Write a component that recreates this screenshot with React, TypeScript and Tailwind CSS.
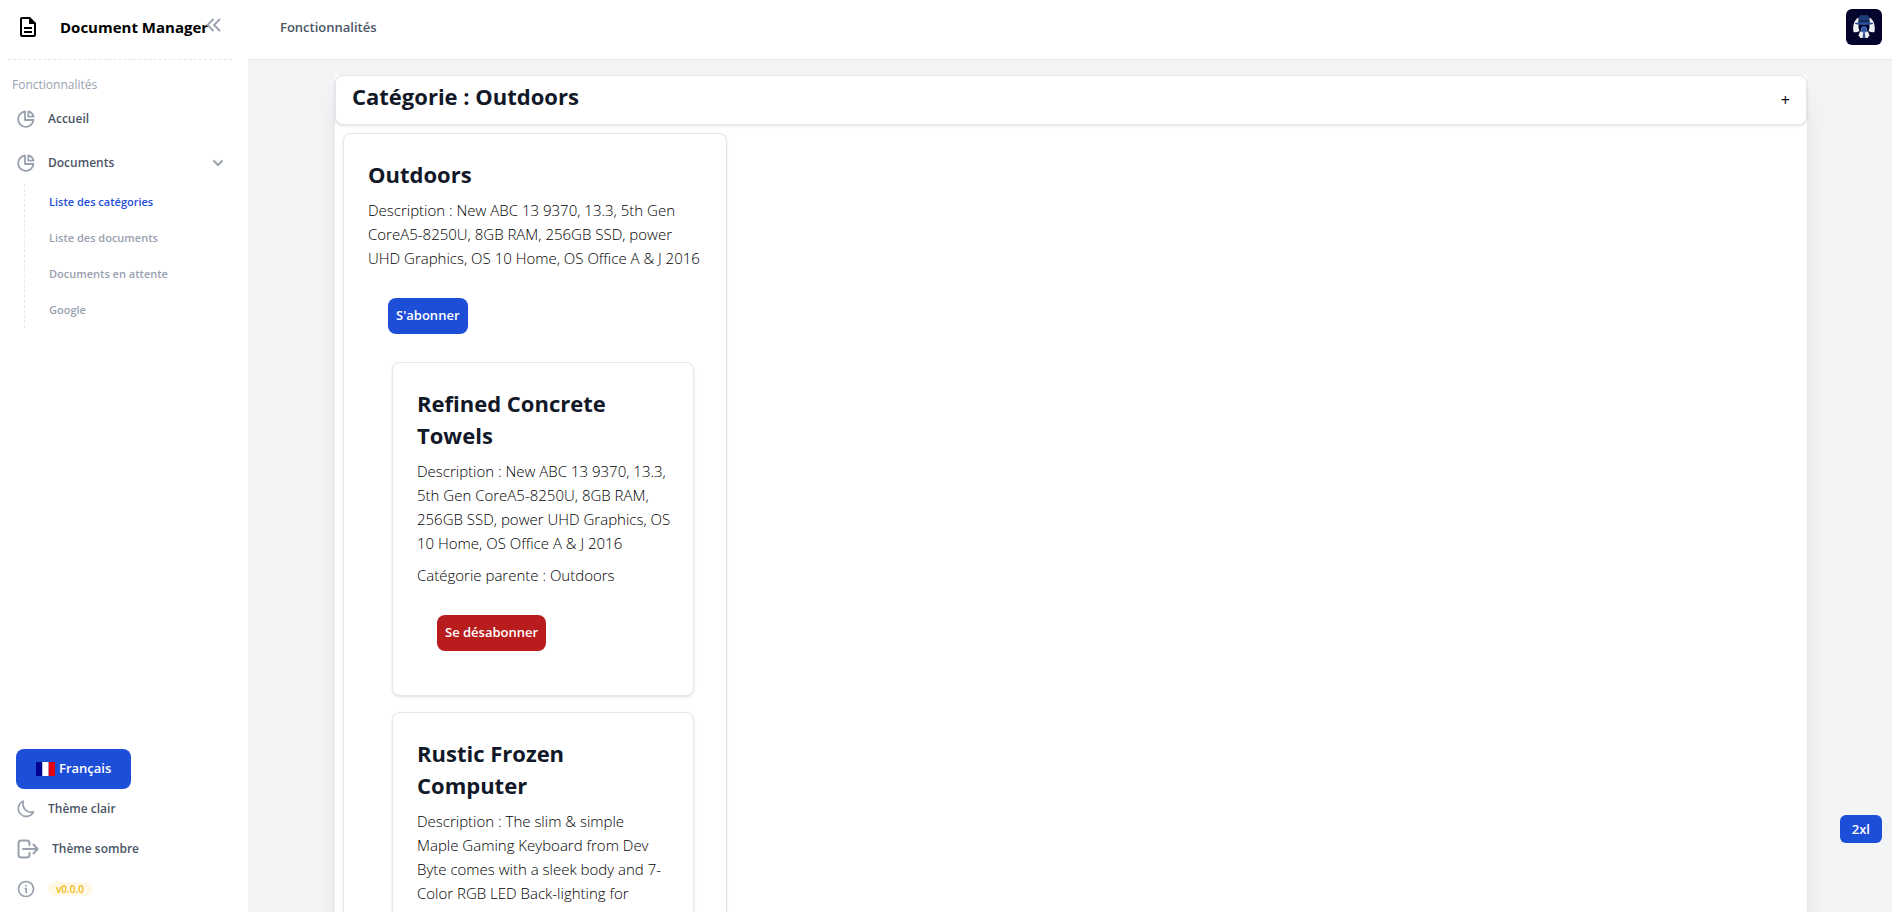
import React from "react";

const PieIcon = () => (
  <svg viewBox="0 0 20 20" className="size-5 shrink-0 text-gray-400" fill="none" stroke="currentColor" strokeWidth="1.8" strokeLinejoin="round" strokeLinecap="round">
    <path d="M9 2.500a7.700 7.700 0 1 0 8.500 8.500H9z" />
    <path d="M12.300 2.500v5.200h5.200A6.500 6.500 0 0 0 12.300 2.500z" />
  </svg>
);

const MoonIcon = () => (
  <svg viewBox="0 0 20 20" className="size-5 shrink-0 text-gray-400" fill="none" stroke="currentColor" strokeWidth="1.7" strokeLinejoin="round">
    <path d="M7.200 2.200a7.900 7.900 0 1 0 10.200 10.600C13 14.500 5.500 11 7.200 2.200z" />
  </svg>
);

const LogoutIcon = () => (
  <svg viewBox="0 0 24 24" className="size-6 shrink-0 text-gray-400" fill="none" stroke="currentColor" strokeWidth="2" strokeLinejoin="round" strokeLinecap="round">
    <path d="M13.500 8V6.500a3 3 0 0 0-3-3h-5a3 3 0 0 0-3 3v11a3 3 0 0 0 3 3h5a3 3 0 0 0 3-3V16" />
    <path d="M7 12h14M17.500 7.500 21.500 12l-4 4.500" />
  </svg>
);

const InfoIcon = () => (
  <svg viewBox="0 0 20 20" className="size-5 shrink-0 text-gray-400" fill="none" stroke="currentColor" strokeWidth="1.700" strokeLinecap="round">
    <circle cx="10" cy="10" r="7.500" />
    <path d="M9.300 9.500h.9v4M9.900 6.600v.2" />
  </svg>
);

const FileIcon = () => (
  <svg viewBox="0 0 24 24" className="size-6 shrink-0" fill="currentColor">
    <path d="M8 16h8v2H8zm0-4h8v2H8zm6-10H6c-1.100 0-2 .9-2 2v16c0 1.100.89 2 1.990 2H18c1.100 0 2-.9 2-2V8l-6-6zm4 18H6V4h7v5h5v11z" />
  </svg>
);

const Avatar = () => (
  <svg viewBox="0 0 36 36" className="size-9 rounded-md">
    <rect width="36" height="36" fill="#03032b" />
    <path d="M12.500 8.500C8 11 6.500 17 7.500 23q3 1 6-1l-1-3zM23.500 8.500C28 11 29.500 17 28.500 23q-3 1-6-1l1-3z" fill="#eef0f2" />
    <path d="M14 22.500h8l1.500 4-2 2.500h-7l-2-2.500z" fill="#eef0f2" />
    <path d="M12.800 13.500 13.200 7q1-1.200 3-1l1.800.6 1.800-.6q2-.2 3 1l.4 6.500z" fill="#1c3c78" />
    <path d="M12.800 11.500h10.400v1.500H12.800z" fill="#0d2250" />
    <path d="M9 14q9-1.800 18 0 .5 1-1 1.300-8 1.400-16 0-1.500-.3-1-1.300z" fill="#2a4f92" />
    <circle cx="18" cy="20.500" r="3.200" fill="#3c66b5" />
    <circle cx="18" cy="20.500" r="1.300" fill="#28498a" />
    <path d="M17.200 23.700h1.600l.6 5.300h-2.800z" fill="#2a4f92" />
  </svg>
);

const subItems = ["Liste des catégories", "Liste des documents", "Documents en attente", "Google"];

function Sidebar() {
  return (
    <aside className="flex w-[248px] shrink-0 flex-col bg-white">
      <div className="mr-4 ml-2 flex h-[60px] shrink-0 items-start border-b border-dashed border-gray-200 pt-[15px]">
        <a href="#" className="flex grow items-center pl-2 text-black">
          <FileIcon />
          <span className="ml-5 text-[15px] leading-6 font-bold whitespace-nowrap">Document Manager</span>
        </a>
        <button aria-label="Réduire le menu" className="mr-2 -ml-2 flex size-5 shrink-0 items-center justify-center text-gray-400">
          <svg viewBox="0 0 20 20" className="size-5" fill="none" stroke="currentColor" strokeWidth="1.8">
            <path d="m9.500 4-6 6 6 6M16 4l-6 6 6 6" />
          </svg>
        </button>
      </div>
      <nav className="flex flex-col pt-4 text-[12px] font-semibold text-gray-600">
        <h2 className="mb-[3px] px-3 leading-[18px] font-medium text-gray-400">Fonctionnalités</h2>
        <a href="#" className="flex h-11 items-center gap-3 px-4 leading-5">
          <PieIcon />
          Accueil
        </a>
        <button className="flex h-[43px] items-center gap-3 px-4 leading-5">
          <PieIcon />
          Documents
          <svg viewBox="0 0 12 12" className="mr-2 ml-auto size-3 text-gray-400" fill="none" stroke="currentColor" strokeWidth="2">
            <path d="m1.500 3.500 4.500 4.500 4.500-4.500" />
          </svg>
        </button>
        <ul className="ml-6 border-l border-dashed border-gray-200 pl-6 text-[11px] text-gray-400">
          {subItems.map((label, i) => (
            <li key={label}>
              <a href="#" className={i === 0 ? "flex h-9 items-center text-[#1d4ed8]" : "flex h-9 items-center"}>{label}</a>
            </li>
          ))}
        </ul>
      </nav>
      <div className="mt-auto flex flex-col items-start pb-[3px] text-[12px] font-semibold text-gray-600">
        <button className="ml-4 flex h-10 items-center gap-1 rounded-lg bg-[#1d4ed8] px-5 text-[13px] text-white">
          <svg viewBox="0 0 19 14" className="h-3.5 w-[19px]">
            <path d="M0 0h6.300v14H0z" fill="#000091" />
            <path d="M6.300 0h6.400v14H6.300z" fill="#fff" />
            <path d="M12.700 0H19v14h-6.300z" fill="#e1000f" />
          </svg>
          Français
        </button>
        <button className="flex h-10 items-center gap-3 px-4"><MoonIcon />Thème clair</button>
        <button className="flex h-10 items-center gap-3 px-4"><LogoutIcon />Thème sombre</button>
        <div className="flex h-10 items-center gap-3 px-4">
          <InfoIcon />
          <span className="rounded-full bg-[#fff8e6] px-2 text-[10px] leading-[14px] text-[#f0b90b]">v0.0.0</span>
        </div>
      </div>
    </aside>
  );
}

const card = "rounded-lg border border-gray-200 bg-white shadow";
const heading = "mb-2 text-[22px] leading-8 font-bold text-[#111827]";
const para = "mb-2 text-[15px] leading-6 font-light whitespace-pre text-black";
const action = "m-5 h-9 rounded-lg px-2 text-[13px] font-semibold text-white";

type SubCategory = { title: string; description: string; parent: string };

const children: SubCategory[] = [
  {
    title: "Refined Concrete Towels",
    description: "New ABC 13 9370, 13.3,\n5th Gen CoreA5-8250U, 8GB RAM,\n256GB SSD, power UHD Graphics, OS\n10 Home, OS Office A & J 2016",
    parent: "Outdoors",
  },
  {
    title: "Rustic Frozen Computer",
    description: "The slim & simple\nMaple Gaming Keyboard from Dev\nByte comes with a sleek body and 7-\nColor RGB LED Back-lighting for\nsmart functionality",
    parent: "Outdoors",
  },
];

export default function App() {
  return (
    <div className="flex h-screen overflow-hidden bg-[#f3f4f6] font-['Open_Sans','Noto_Sans',sans-serif]">
      <Sidebar />
      <div className="flex min-w-0 grow flex-col">
        <header className="flex h-[60px] shrink-0 items-center justify-between border-b border-gray-200 bg-white pr-[10px] pb-[5px] pl-8">
          <span className="pt-0.5 text-[13px] font-semibold text-gray-600">Fonctionnalités</span>
          <button aria-label="Profil"><Avatar /></button>
        </header>
        <main className="min-h-0 grow overflow-hidden pt-[15px] pr-8 pl-[34px]">
          <div className="mx-auto max-w-[1472px] bg-white shadow-xl">
            <div className="flex items-center justify-between rounded-lg border border-gray-200 bg-white px-4 py-1 shadow">
              <h1 className={heading}>Catégorie : Outdoors</h1>
              <button aria-label="Ajouter" className="text-base leading-6 text-black">+</button>
            </div>
            <div className="p-2">
              <article className={`${card} w-96 p-6`}>
                <h2 className={heading}>Outdoors</h2>
                <p className={para}>{"Description : New ABC 13 9370, 13.3, 5th Gen\nCoreA5-8250U, 8GB RAM, 256GB SSD, power\nUHD Graphics, OS 10 Home, OS Office A & J 2016"}</p>
                <div className="flex">
                  <button className={`${action} bg-[#1d4ed8]`}>S'abonner</button>
                </div>
                <div className="mt-2 mr-2 ml-6 flex flex-col gap-4">
                  {children.map((c) => (
                    <section key={c.title} className={`${card} p-6`}>
                      <h3 className={heading}>{c.title}</h3>
                      <p className={para}>{`Description : ${c.description}`}</p>
                      <p className={para}>{`Catégorie parente : ${c.parent}`}</p>
                      <div className="flex">
                        <button className={`${action} bg-[#b91c1c]`}>Se désabonner</button>
                      </div>
                    </section>
                  ))}
                </div>
              </article>
            </div>
          </div>
        </main>
      </div>
      <div className="fixed right-[10px] bottom-[69px] rounded-md bg-[#1d4ed8] px-3 text-[13px] leading-7 font-semibold text-white">2xl</div>
    </div>
  );
}
